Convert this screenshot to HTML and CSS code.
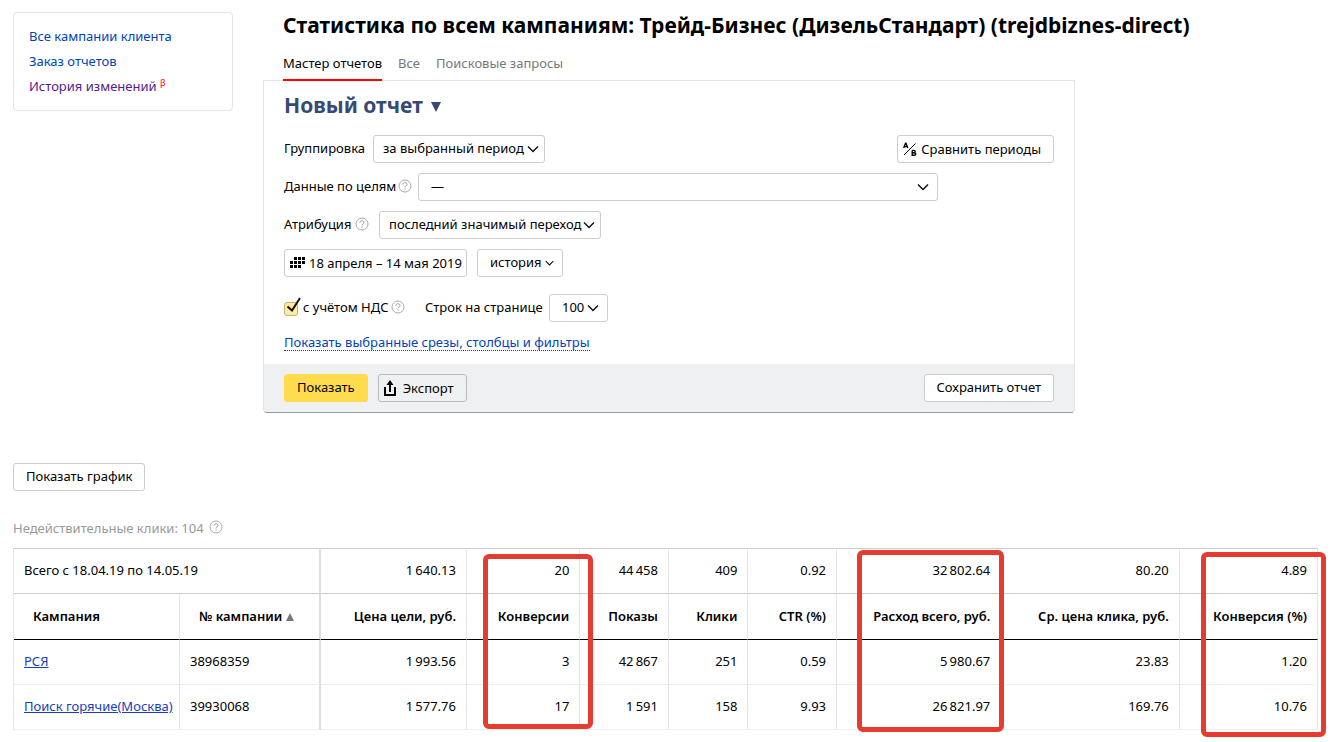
FILE: index.html
```html
<!DOCTYPE html>
<html lang="ru">
<head>
<meta charset="utf-8">
<title>Статистика по всем кампаниям</title>
<link rel="stylesheet" href="styles.css">
</head>
<body>
<svg class="defs" aria-hidden="true">
  <symbol id="chevron" viewBox="0 0 12 8"><path d="M1 1.5 6 6.5 11 1.5" fill="none" stroke="#111" stroke-width="1.5"/></symbol>
  <symbol id="help" viewBox="0 0 14 14"><circle cx="7" cy="7" r="6" fill="none" stroke="#aaa"/><path d="M5 5.6C5 4.3 5.9 3.7 7 3.7S9 4.4 9 5.5C9 6.8 7.1 6.8 7.1 8.4M7.1 9.4V10.6" fill="none" stroke="#999"/></symbol>
</svg>
<div class="top">
  <nav class="side">
    <a href="#">Все кампании клиента</a>
    <a href="#">Заказ отчетов</a>
    <a href="#" class="visited">История изменений <sup>β</sup></a>
  </nav>
  <main class="main">
    <h1>Статистика по всем кампаниям: Трейд-Бизнес (ДизельСтандарт) (trejdbiznes-direct)</h1>
    <nav class="tabs">
      <a href="#" class="active">Мастер отчетов</a>
      <a href="#">Все</a>
      <a href="#">Поисковые запросы</a>
    </nav>
    <form class="panel">
      <div class="fields">
        <h2>Новый отчет <svg width="10" height="10" viewBox="0 0 10 10"><path d="M0 0H10L5 10Z" fill="#364a73"/></svg></h2>
        <div class="row">
          <label for="group" class="w-group">Группировка</label>
          <span class="select s-group"><select id="group"><option>за выбранный период</option></select><svg><use href="#chevron"/></svg></span>
          <button type="button" class="btn icon-btn push">
            <svg width="14" height="14" viewBox="0 0 14 14" fill="none" stroke="#000"><path d="M1 13 12.5 1.5" stroke-width="1"/><path d="M.7 6 2.5 1.2H3L4.8 6M1.4 4.6H4.2" stroke-width="1.3"/><path d="M9.2 8.4V13.2H11.2C13.2 13.2 13.2 10.8 11.2 10.8H9.2M11 10.8C12.6 10.8 12.6 8.4 11 8.4H9.2" stroke-width="1.4"/></svg>
            Сравнить периоды</button>
        </div>
        <div class="row">
          <label for="goal" class="w-goal">Данные по целям</label><svg class="help"><use href="#help"/></svg>
          <span class="select s-goal"><select id="goal"><option>—</option></select><svg><use href="#chevron"/></svg></span>
        </div>
        <div class="row">
          <label for="attr" class="w-attr">Атрибуция</label><svg class="help"><use href="#help"/></svg>
          <span class="select s-attr"><select id="attr"><option>последний значимый переход</option></select><svg><use href="#chevron"/></svg></span>
        </div>
        <div class="row">
          <button type="button" class="btn icon-btn date">
            <svg width="15" height="11" viewBox="0 0 15 11"><path d="M4 0h3v3H4zM8 0h3v3H8zM12 0h3v3h-3zM0 4h3v3H0zM4 4h3v3H4zM8 4h3v3H8zM12 4h3v3h-3zM0 8h3v3H0zM4 8h3v3H4zM8 8h3v3H8z"/></svg>
            18 апреля – 14 мая 2019</button>
          <span class="select s-hist"><select aria-label="Период"><option>история</option></select><svg class="small"><use href="#chevron"/></svg></span>
        </div>
        <div class="row gap-top">
          <span class="check"><input type="checkbox" id="vat" checked><svg width="17" height="18" viewBox="0 0 17 18"><path d="M3.5 9.5 8 13.5 16 1" fill="none" stroke="#111" stroke-width="2"/></svg></span>
          <label for="vat" class="w-vat">с учётом НДС</label><svg class="help"><use href="#help"/></svg>
          <label for="rows" class="w-rows">Строк на странице</label>
          <span class="select s-rows"><select id="rows"><option>100</option></select><svg><use href="#chevron"/></svg></span>
        </div>
        <a href="#" class="more">Показать выбранные срезы, столбцы и фильтры</a>
      </div>
      <div class="actions">
        <button type="button" class="btn primary">Показать</button>
        <button type="button" class="btn icon-btn export">
          <svg width="12" height="16" viewBox="0 0 12 16"><path d="M1 7V15H11V7" fill="none" stroke="#000" stroke-width="2"/><path d="M6 0 9.5 5H7V12H5V5H2.5Z"/></svg>
          Экспорт</button>
        <button type="button" class="btn push">Сохранить отчет</button>
      </div>
    </form>
  </main>
</div>
<section class="report">
  <button type="button" class="btn">Показать график</button>
  <p class="invalid">Недействительные клики: 104 <svg class="help"><use href="#help"/></svg></p>
  <div class="table-wrap">
    <table>
      <colgroup><col class="c1"><col class="c2"><col class="c3"><col class="c4"><col class="c5"><col class="c6"><col class="c7"><col class="c8"><col class="c9"><col class="c10"></colgroup>
      <thead>
        <tr class="total"><td colspan="2" class="text fix">Всего с 18.04.19 по 14.05.19</td><td>1&#8201;640.13</td><td>20</td><td>44&#8201;458</td><td>409</td><td>0.92</td><td>32&#8201;802.64</td><td>80.20</td><td>4.89</td></tr>
        <tr class="names"><th class="text">Кампания</th><th class="text fix">№ кампании <svg width="8" height="8" viewBox="0 0 8 8"><path d="M4 0 8 8H0Z" fill="#777"/></svg></th><th>Цена цели, руб.</th><th>Конверсии</th><th>Показы</th><th>Клики</th><th>CTR (%)</th><th>Расход всего, руб.</th><th>Ср. цена клика, руб.</th><th>Конверсия (%)</th></tr>
      </thead>
      <tbody>
        <tr><td class="text"><a href="#">РСЯ</a></td><td class="text fix">38968359</td><td>1&#8201;993.56</td><td>3</td><td>42&#8201;867</td><td>251</td><td>0.59</td><td>5&#8201;980.67</td><td>23.83</td><td>1.20</td></tr>
        <tr><td class="text"><a href="#">Поиск горячие(Москва)</a></td><td class="text fix">39930068</td><td>1&#8201;577.76</td><td>17</td><td>1&#8201;591</td><td>158</td><td>9.93</td><td>26&#8201;821.97</td><td>169.76</td><td>10.76</td></tr>
      </tbody>
    </table>
    <span class="mark m1"></span><span class="mark m2"></span><span class="mark m3"></span>
  </div>
</section>
</body>
</html>
```
FILE: styles.css
```css
* { box-sizing: border-box; }
body { margin: 0; padding: 12px 15px 12px 13px; background: #fff; color: #000; font: 13px/20px "Noto Sans", "Open Sans", sans-serif; }
.defs { display: none; }
svg { flex: none; }
a { color: #04b; text-decoration: none; }
.top { display: flex; align-items: flex-start; gap: 30px; }
.side { display: flex; flex-direction: column; gap: 5px; width: 220px; flex: none; padding: 13px 15px 14px; border: 1px solid #e5e5e5; border-radius: 4px; }
.side .visited { color: #551a8b; }
.side sup { color: #f00; font-size: 9px; line-height: 0; }
.main { flex: 1; min-width: 0; }
h1 { margin: 0 0 0 20px; font-size: 21px; line-height: 26px; font-weight: 700; white-space: nowrap; }
.tabs { display: flex; gap: 16px; margin: 15px 0 -1px 20px; position: relative; }
.tabs a { color: #777; padding-bottom: 6px; border-bottom: 2px solid transparent; }
.tabs a.active { color: #000; border-color: #f00; }
.panel { max-width: 812px; border: 1px solid #e5e5e5; border-bottom-color: #999; border-radius: 0 0 4px 4px; }
.fields { padding: 10px 20px 12px; }
h2 { display: flex; align-items: center; gap: 8px; margin: 0 0 16px; color: #364a73; font-size: 21px; line-height: 28px; font-weight: 700; }
h2 svg { margin-top: 3px; }
.row { display: flex; align-items: center; margin-bottom: 10px; }
.row label { white-space: nowrap; padding-bottom: 2px; }
.gap-top { margin-top: 17px; }
.row .push, .actions .push { margin-left: auto; }
.help { width: 14px; height: 14px; margin-bottom: 2px; }
.btn { font: inherit; color: #000; height: 28px; padding: 0 12px 2px; border: 1px solid #ccc; border-radius: 3px; background: #fff; white-space: nowrap; }
.icon-btn { display: flex; align-items: center; gap: 4px; padding: 0 12px 1px 5px; }
.select { display: grid; align-items: center; }
.select > * { grid-area: 1 / 1; }
.select select { appearance: none; width: 100%; height: 28px; padding: 0 0 2px 9px; border: 1px solid #ccc; border-radius: 3px; background: #fff; color: #000; font: inherit; }
.select svg { width: 12px; height: 8px; justify-self: end; margin-right: 6px; pointer-events: none; }
.select svg.small { width: 9px; height: 6px; margin-right: 9px; }
.select.s-goal select, .select.s-hist select, .select.s-rows select { padding-left: 12px; }
.select.s-goal svg, .select.s-rows svg { margin-right: 9px; }
.s-group { width: 172px; }
.s-goal { width: 520px; }
.s-attr { width: 222px; }
.s-hist { width: 86px; margin-left: 10px; }
.s-rows { width: 59px; }
.date { width: 183px; }
.w-group { width: 89px; }
.w-goal { width: 114px; }
.w-goal + .help { margin-right: 6px; }
.w-attr { width: 71px; }
.w-attr + .help { margin-right: 10px; }
.w-vat { width: 88px; }
.w-vat + .help { margin-right: 20px; }
.w-rows { width: 124px; }
.check { display: grid; width: 19px; }
.check > * { grid-area: 1 / 1; }
.check input { appearance: none; width: 14px; height: 14px; margin: 2px 0 0; border: 1px solid #c4b37a; border-radius: 3px; background: #ffeba0; }
.check svg { pointer-events: none; margin-top: -3px; }
.more { display: inline-block; line-height: 16px; border-bottom: 1px dotted #04b; }
.actions { display: flex; gap: 10px; padding: 10px 20px; background: #eff0f2; border-radius: 0 0 4px 4px; }
.primary { background: #ffdb4d; border-color: #ffdb4d; }
.export { background: transparent; border-color: #bbb; gap: 7px; }
.report { margin-top: 50px; }
.invalid { display: flex; align-items: center; gap: 5px; margin: 27px 0 10px; color: #999; }
.table-wrap { position: relative; }
table { width: 100%; table-layout: fixed; border-collapse: separate; border-spacing: 0; border-left: 1px solid #e5e5e5; }
td, th { height: 45px; padding: 0 10px 2px; border-right: 1px solid #e5e5e5; border-bottom: 1px solid #eee; text-align: right; font-weight: 400; white-space: nowrap; }
.total td { height: 46px; border-top: 1px solid #ccc; border-bottom-color: #ccc; }
.names th { height: 46px; border-bottom-color: #000; font-weight: 600; }
.text { text-align: left; }
th.text { padding-left: 19px; }
td.fix, th.fix { border-right: 2px solid #ddd; }
td a { color: #1a3dc1; text-decoration: underline; }
.c1 { width: 166px; } .c2 { width: 141px; } .c3 { width: 11.2%; } .c4 { width: 8.7%; } .c5 { width: 6.8%; }
.c6 { width: 6.1%; } .c7 { width: 6.8%; } .c8 { width: 12.6%; } .c9 { width: 13.7%; } .c10 { width: 10.6%; }
.mark { position: absolute; border: 5px solid #e53c32; border-radius: 6px; pointer-events: none; }
.m1 { left: 36%; top: 6px; width: 110px; height: 175px; }
.m2 { left: 64.7%; top: 2px; width: 147px; height: 182px; }
.m3 { right: -8px; top: 4px; width: 125px; height: 185px; }
```
